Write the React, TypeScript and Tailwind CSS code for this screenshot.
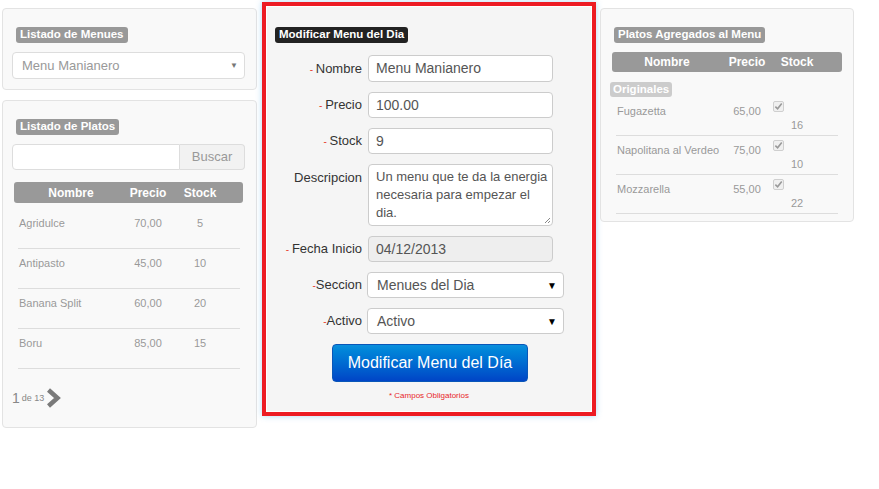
import React from "react";

const Badge = ({ children, className = "" }: { children: React.ReactNode; className?: string }) => (
  <div className={`flex h-[16px] w-fit items-center rounded-[3px] px-[4px] text-[11.5px] font-bold leading-none text-white ${className}`}>
    {children}
  </div>
);

const Check = () => (
  <div className="flex h-[11px] w-[11px] items-center justify-center rounded-[2px] border border-[#cfcfcf] bg-[#f0f0f0]">
    <svg width="9" height="9" viewBox="0 0 10 10">
      <path d="M1.5 5.2 L4 7.6 L8.6 1.8" fill="none" stroke="#9a9a9a" strokeWidth="1.8" />
    </svg>
  </div>
);

const platos = [
  ["Agridulce", "70,00", "5"],
  ["Antipasto", "45,00", "10"],
  ["Banana Split", "60,00", "20"],
  ["Boru", "85,00", "15"],
];

const agregados = [
  ["Fugazetta", "65,00", "16"],
  ["Napolitana al Verdeo", "75,00", "10"],
  ["Mozzarella", "55,00", "22"],
];

const Label = ({ dash, text, tight }: { dash?: boolean; text: string; tight?: boolean }) => (
  <div className="w-[96px] shrink-0 text-right text-[13px] text-[#333]">
    {dash && <span className="text-[#e8402f] text-[10px] align-middle">{tight ? "-" : "- "}</span>}
    {text}
  </div>
);

export default function App() {
  return (
    <div
      className="flex h-[489px] w-[879px] items-start bg-white pl-[2px] pt-[2px]"
      style={{ fontFamily: '"Liberation Sans", Arial, sans-serif' }}
    >
      {/* Left column */}
      <div className="mt-[6px] flex w-[255px] flex-col gap-[10px]">
        <div className="h-[82px] rounded-[4px] border border-[#e3e3e3] bg-[#f9f9f9] pl-[9px] pr-[11px] pt-[18px]">
          <Badge className="ml-[4px] bg-[#999]">Listado de Menues</Badge>
          <div className="mt-[9px] flex h-[27px] items-center justify-between rounded-[4px] border border-[#ddd] bg-white pl-[9px] pr-[6px]">
            <span className="text-[13px] text-[#999]">Menu Manianero</span>
            <span className="text-[8px] text-[#777]">▼</span>
          </div>
        </div>

        <div className="h-[328px] rounded-[4px] border border-[#e3e3e3] bg-[#f9f9f9] pl-[9px] pr-[11px] pt-[18px]">
          <Badge className="ml-[4px] bg-[#999]">Listado de Platos</Badge>
          <div className="mt-[9px] flex h-[26px]">
            <div className="flex-1 rounded-l-[4px] border border-[#ddd] bg-white" />
            <div className="flex w-[65px] items-center justify-center rounded-r-[4px] border border-l-0 border-[#ddd] bg-[#f2f2f2] text-[13px] text-[#999]">
              Buscar
            </div>
          </div>
          <div className="ml-[2px] mt-[12px] grid h-[21px] w-[229px] grid-cols-[114px_40px_64px] items-center rounded-[3px] bg-[#999] text-[12px] font-bold text-white">
            <div className="text-center">Nombre</div>
            <div className="text-center">Precio</div>
            <div className="text-center">Stock</div>
          </div>
          <div className="ml-[6px] mt-[6px] w-[222px]">
            {platos.map(([n, p, s]) => (
              <div
                key={n}
                className="grid h-[40px] grid-cols-[110px_40px_64px] border-b border-[#ddd] pt-[7px] text-[11px] leading-[14px] text-[#999]"
              >
                <div className="pl-[1px]">{n}</div>
                <div className="text-center">{p}</div>
                <div className="text-center">{s}</div>
              </div>
            ))}
          </div>
          <div className="mt-[19px] flex items-center text-[#888]">
            <span className="text-[14px] leading-none">1</span>
            <span className="ml-[2px] text-[9px] leading-none">de 13</span>
            <svg className="ml-[2px]" width="16" height="20" viewBox="0 0 16 20">
              <path d="M2.5 2 L11.5 10 L2.5 18" fill="none" stroke="#7a7a7a" strokeWidth="4.5" strokeLinejoin="miter" />
            </svg>
          </div>
        </div>
      </div>

      {/* Middle form */}
      <div className="ml-[5px] h-[414px] w-[334px] border-4 border-[#ed1c24] shadow-[0_0_6px_rgba(82,168,236,0.45)]">
        <div className="flex h-full w-full flex-col border border-white bg-[#f5f5f5] pt-[20px]">
          <Badge className="ml-[8px] bg-[#222]">Modificar Menu del Dia</Badge>
          <div className="-ml-px mt-[12px] flex flex-col gap-[10px]">
            <div className="flex items-center gap-[6px]">
              <Label dash text="Nombre" />
              <div className="flex h-[27px] w-[185px] items-center rounded-[4px] border border-[#ccc] bg-white pl-[7px] text-[14px] text-[#555]">
                Menu Manianero
              </div>
            </div>
            <div className="flex items-center gap-[6px]">
              <Label dash text="Precio" />
              <div className="flex h-[26px] w-[185px] items-center rounded-[4px] border border-[#ccc] bg-white pl-[7px] text-[14px] text-[#555]">
                100.00
              </div>
            </div>
            <div className="flex items-center gap-[6px]">
              <Label dash text="Stock" />
              <div className="flex h-[26px] w-[185px] items-center rounded-[4px] border border-[#ccc] bg-white pl-[7px] text-[14px] text-[#555]">
                9
              </div>
            </div>
            <div className="flex items-start gap-[6px]">
              <div className="pt-[4px]">
                <Label text="Descripcion" />
              </div>
              <div className="relative h-[62px] w-[185px] whitespace-nowrap rounded-[4px] border border-[#ccc] bg-white pl-[7px] pt-[3px] text-[13px] leading-[18px] text-[#555]">
                Un menu que te da la energia
                <br />
                necesaria para empezar el
                <br />
                dia.
                <svg className="absolute bottom-[1px] right-[1px]" width="8" height="8" viewBox="0 0 8 8">
                  <path d="M7 2 L2 7 M7 5 L5 7" stroke="#888" strokeWidth="1" />
                </svg>
              </div>
            </div>
            <div className="flex items-center gap-[6px]">
              <Label dash text="Fecha Inicio" />
              <div className="flex h-[26px] w-[185px] items-center rounded-[4px] border border-[#ccc] bg-[#eee] pl-[7px] text-[14px] text-[#555]">
                04/12/2013
              </div>
            </div>
            <div className="flex items-center gap-[5px]">
              <Label dash tight text="Seccion" />
              <div className="flex h-[26px] w-[197px] items-center justify-between rounded-[4px] border border-[#ccc] bg-white pl-[9px] pr-[6px] text-[14px] text-[#555]">
                <span>Menues del Dia</span>
                <span className="text-[10px] text-black">▼</span>
              </div>
            </div>
            <div className="flex items-center gap-[5px]">
              <Label dash tight text="Activo" />
              <div className="flex h-[26px] w-[197px] items-center justify-between rounded-[4px] border border-[#ccc] bg-white pl-[9px] pr-[6px] text-[14px] text-[#555]">
                <span>Activo</span>
                <span className="text-[10px] text-black">▼</span>
              </div>
            </div>
          </div>
          <div className="mt-[10px] flex justify-center">
            <div className="ml-[2px] flex h-[38px] w-[196px] items-center justify-center rounded-[4px] border border-[#0a56b8] bg-gradient-to-b from-[#0b8fdc] to-[#0144c6] text-[16px] text-white">
              Modificar Menu del Día
            </div>
          </div>
          <div className="mt-[8px] text-center text-[8px] text-[#e8272a]">* Campos Obligatorios</div>
        </div>
      </div>

      {/* Right panel */}
      <div className="ml-[4px] mt-[6px] h-[214px] w-[254px] rounded-[4px] border border-[#e3e3e3] bg-[#f9f9f9] px-[11px] pt-[18px]">
        <Badge className="ml-[2px] bg-[#999]">Platos Agregados al Menu</Badge>
        <div className="mt-[9px] grid h-[20px] w-[230px] grid-cols-[110px_50px_50px] items-center rounded-[3px] bg-[#999] text-[12px] font-bold text-white">
          <div className="text-center">Nombre</div>
          <div className="text-center">Precio</div>
          <div className="text-center">Stock</div>
        </div>
        <div className="-ml-[2px] mt-[10px] flex h-[15px] w-fit items-center rounded-[3px] bg-[#ccc] px-[3px] text-[11.5px] font-bold leading-none text-white">
          Originales
        </div>
        <div className="ml-[4px] w-[222px]">
          {agregados.map(([n, p, s]) => (
            <div
              key={n}
              className="grid h-[39px] grid-cols-[106px_50px_50px] border-b border-[#ddd] pt-[7px] text-[11px] leading-[14px] text-[#999]"
            >
              <div className="pl-[1px]">{n}</div>
              <div className="text-center">{p}</div>
              <div className="flex flex-col">
                <div className="ml-[1px] mt-[-3px] h-[14px]">
                  <Check />
                </div>
                <div className="mt-[3px] text-center">{s}</div>
              </div>
            </div>
          ))}
        </div>
      </div>
    </div>
  );
}
